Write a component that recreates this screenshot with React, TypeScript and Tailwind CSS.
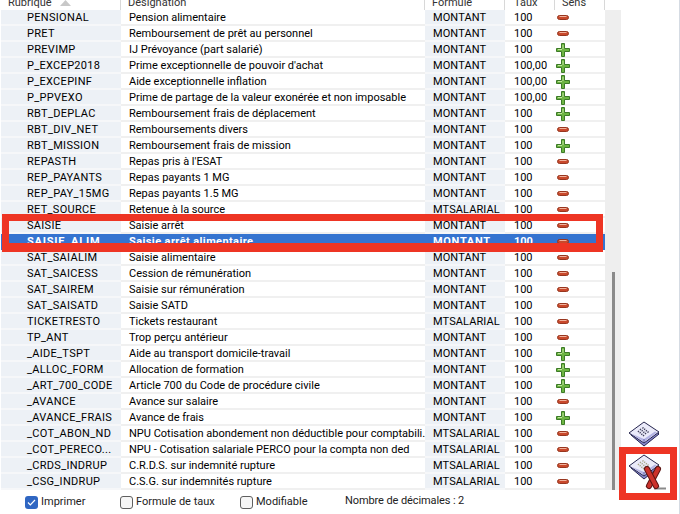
const rows: [string, string, string, string, boolean][] = [
  ['PENSIONAL', 'Pension alimentaire', 'MONTANT', '100', false],
  ['PRET', 'Remboursement de prêt au personnel', 'MONTANT', '100', false],
  ['PREVIMP', 'IJ Prévoyance (part salarié)', 'MONTANT', '100', true],
  ['P_EXCEP2018', "Prime exceptionnelle de pouvoir d'achat", 'MONTANT', '100,00', true],
  ['P_EXCEPINF', 'Aide exceptionnelle inflation', 'MONTANT', '100,00', true],
  ['P_PPVEXO', 'Prime de partage de la valeur exonérée et non imposable', 'MONTANT', '100,00', true],
  ['RBT_DEPLAC', 'Remboursement frais de déplacement', 'MONTANT', '100', true],
  ['RBT_DIV_NET', 'Remboursements divers', 'MONTANT', '100', false],
  ['RBT_MISSION', 'Remboursement frais de mission', 'MONTANT', '100', true],
  ['REPASTH', "Repas pris à l'ESAT", 'MONTANT', '100', false],
  ['REP_PAYANTS', 'Repas payants 1 MG', 'MONTANT', '100', false],
  ['REP_PAY_15MG', 'Repas payants 1.5 MG', 'MONTANT', '100', false],
  ['RET_SOURCE', 'Retenue à la source', 'MTSALARIAL', '100', false],
  ['SAISIE', 'Saisie arrêt', 'MONTANT', '100', false],
  ['SAISIE_ALIM', 'Saisie arrêt alimentaire', 'MONTANT', '100', false],
  ['SAT_SAIALIM', 'Saisie alimentaire', 'MONTANT', '100', false],
  ['SAT_SAICESS', 'Cession de rémunération', 'MONTANT', '100', false],
  ['SAT_SAIREM', 'Saisie sur rémunération', 'MONTANT', '100', false],
  ['SAT_SAISATD', 'Saisie SATD', 'MONTANT', '100', false],
  ['TICKETRESTO', 'Tickets restaurant', 'MTSALARIAL', '100', false],
  ['TP_ANT', 'Trop perçu antérieur', 'MONTANT', '100', false],
  ['_AIDE_TSPT', 'Aide au transport domicile-travail', 'MONTANT', '100', true],
  ['_ALLOC_FORM', 'Allocation de formation', 'MONTANT', '100', true],
  ['_ART_700_CODE', 'Article 700 du Code de procédure civile', 'MONTANT', '100', true],
  ['_AVANCE', 'Avance sur salaire', 'MONTANT', '100', false],
  ['_AVANCE_FRAIS', 'Avance de frais', 'MONTANT', '100', true],
  ['_COT_ABON_ND', 'NPU Cotisation abondement non déductible pour comptabili...', 'MTSALARIAL', '100', false],
  ['_COT_PERECO...', 'NPU - Cotisation salariale PERCO pour la compta non ded', 'MTSALARIAL', '100', false],
  ['_CRDS_INDRUP', 'C.R.D.S. sur indemnité rupture', 'MTSALARIAL', '100', false],
  ['_CSG_INDRUP', 'C.S.G. sur indemnités rupture', 'MTSALARIAL', '100', false],
];

function Sign({ plus }: { plus: boolean }) {
  if (plus) {
    return (
      <svg width="14" height="14" viewBox="0 0 14 14" className="ml-px block">
        <path d="M5.500.5h3v5h5v3h-5v5h-3v-5h-5v-3h5z" fill="#6db542" stroke="#3c7a27" strokeLinejoin="round" />
        <path d="M7 2v4M2 6.500h4" fill="none" stroke="#bfe59a" />
      </svg>
    );
  }
  return (
    <svg width="12" height="5" viewBox="0 0 12 5" className="ml-[2px] block">
      <rect x="0.5" y="0.5" width="11" height="4" rx="2" fill="#c9482b" stroke="#97361f" />
      <path d="M2.500 1.500h7" stroke="#efb09a" />
    </svg>
  );
}

function Book() {
  return (
    <g>
      <path d="M3 14l13 11 15-12-3-3L16 21 3 11z" fill="#8686cc" stroke="#26264e" strokeLinejoin="round" />
      <path d="M1 12L16 1l15 10-15 11z" fill="#ebebfa" stroke="#26264e" strokeLinejoin="round" />
      <path d="M3 12.500l13 8.500 13-9.500-2-1L16 18z" fill="#b4b4e4" />
      <path d="M16 18l0 3" stroke="#6c6cb0" />
    </g>
  );
}

function BookIcon() {
  return (
    <svg width="32" height="26" viewBox="0 0 32 26" className="block">
      <Book />
      <path d="M12 8l6 5M14.500 6.500l6 5M10 10l6 5" stroke="#40405a" strokeWidth="1.600" strokeDasharray="1.200 1" />
    </svg>
  );
}

function BookCrossIcon() {
  return (
    <svg width="40" height="36" viewBox="0 0 40 36" className="block">
      <Book />
      <path d="M12 8l6 5M14.500 6.500l6 5M10 10l6 5" stroke="#a8a888" strokeWidth="1.600" strokeDasharray="1.200 1" />
      <path d="M26 34.500h12" stroke="#8a8a8a" strokeWidth="2" />
      <path d="M30 15l-9 17" stroke="#5e1512" strokeWidth="6" strokeLinecap="round" />
      <path d="M30 15l-9 17" stroke="#cc322b" strokeWidth="4" strokeLinecap="round" />
      <path d="M19 15l9 17" stroke="#5e1512" strokeWidth="6" strokeLinecap="round" />
      <path d="M19 15l9 17" stroke="#cc322b" strokeWidth="4" strokeLinecap="round" />
    </svg>
  );
}

function Check({ checked, label, className }: { checked?: boolean; label: string; className: string }) {
  return (
    <div className={`flex items-center gap-[3px] ${className}`}>
      {checked ? (
        <span className="flex h-[13px] w-[13px] items-center justify-center rounded-[3px] bg-[#2f66c2]">
          <svg width="9" height="9" viewBox="0 0 9 9">
            <path d="M1 4.500l2.300 2.300L8 2" fill="none" stroke="#fff" strokeWidth="1.200" />
          </svg>
        </span>
      ) : (
        <span className="h-[13px] w-[13px] rounded-[3px] border border-[#5f5f5f] bg-[#f6f6f6]" />
      )}
      <span>{label}</span>
    </div>
  );
}

export default function App() {
  return (
    <div className="relative flex h-[514px] w-[680px] flex-col overflow-hidden border-r border-[#d5dbe3] bg-white font-['Roboto',sans-serif] text-[11px] text-black">
      <div className="flex">
        <div className="ml-px w-[604px]">
          <div className="flex h-[10px] items-end overflow-hidden leading-[14px] text-[#333]">
            <div className="flex w-[120px] shrink-0 items-center border-r border-[#d8d8d8] pl-[7px]">
              Rubrique
              <svg width="11" height="6" viewBox="0 0 11 6" className="ml-[8px]">
                <path d="M5.500 0L11 6H0z" fill="#c8c8c8" />
              </svg>
            </div>
            <div className="w-[304px] shrink-0 border-r border-[#d8d8d8] pl-[7px]">Désignation</div>
            <div className="w-[80px] shrink-0 border-r border-[#d8d8d8] pl-[7px]">Formule</div>
            <div className="w-[50px] shrink-0 border-r border-[#d8d8d8] pl-[9px]">Taux</div>
            <div className="w-[50px] shrink-0 border-r border-[#d8d8d8] pl-[7px]">Sens</div>
          </div>
          {rows.map(([code, label, formula, rate, plus]) => {
            const selected = code === 'SAISIE_ALIM';
            const line = selected ? 'border-transparent' : 'border-[#f0f0f0]';
            const shaded = selected ? 'border-transparent' : 'border-[#f6f7f9] bg-[#edf1f6]';
            return (
              <div
                key={code}
                className={`flex h-[16px] leading-[14px] ${selected ? 'bg-[#3574d0] font-bold text-white' : ''}`}
              >
                <div className={`flex w-[120px] shrink-0 items-center border-b-2 pl-[26px] pt-px ${selected ? 'tracking-[0.8px]' : 'tracking-[0.3px]'} ${shaded}`}>
                  {code}
                </div>
                <div className={`flex w-[304px] shrink-0 items-center overflow-hidden whitespace-nowrap border-b-2 pl-[8px] pt-px ${selected ? 'tracking-[0.4px]' : ''} ${line}`}>
                  {label}
                </div>
                <div className={`flex w-[80px] shrink-0 items-center border-b-2 pl-[8px] pt-px ${selected ? 'tracking-[0.7px]' : 'tracking-[0.1px]'} ${shaded}`}>
                  {formula}
                </div>
                <div className={`flex w-[50px] shrink-0 items-center border-b-2 pl-[9px] pt-px ${line}`}>{rate}</div>
                <div className={`flex w-[50px] shrink-0 items-center border-b-2 pt-px ${line}`}>
                  <Sign plus={plus} />
                </div>
              </div>
            );
          })}
        </div>
        <div className="mt-[10px] flex h-[480px] w-[16px] justify-center bg-[#eeeeee]">
          <div className="mt-[262px] h-[218px] w-[3px] bg-[#8a8a8a]" />
        </div>
        <div className="flex flex-1 flex-col justify-end pl-[7px]">
          <BookIcon />
          <div className="mt-[7px]">
            <BookCrossIcon />
          </div>
        </div>
      </div>
      <div className="flex h-[24px] items-center pl-[25px] text-[#222]">
        <Check checked label="Imprimer" className="w-[95px]" />
        <Check label="Formule de taux" className="w-[120px]" />
        <Check label="Modifiable" className="w-[105px]" />
        <span className="-mt-px tracking-[-0.1px]">Nombre de décimales : 2</span>
      </div>
      <div className="absolute left-[2px] top-[214px] h-[38px] w-[601px] border-x-[7px] border-b-[9px] border-t-[7px] border-[#ee3524]" />
      <div className="absolute left-[619px] top-[447px] h-[53px] w-[58px] border-[7px] border-[#ee3524]" />
    </div>
  );
}
